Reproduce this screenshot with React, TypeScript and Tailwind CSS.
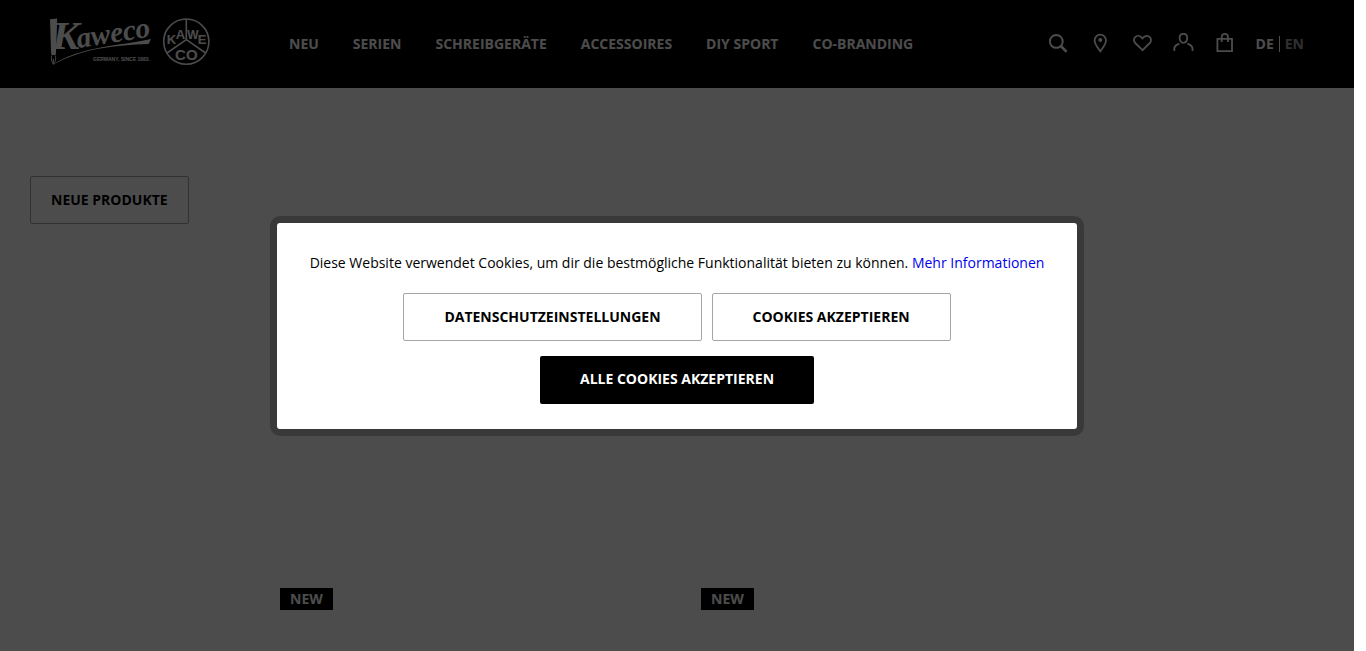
import type { ReactNode } from "react"
import clsx from "clsx"

const NAV_ITEMS = [
  "Neu",
  "Serien",
  "Schreibgeräte",
  "Accessoires",
  "DIY Sport",
  "Co-Branding",
]

function Logo() {
  return (
    <svg
      width="160"
      height="48"
      viewBox="0 0 160 48"
      fill="currentColor"
      className="overflow-visible"
    >
      {/* pen body and nib */}
      <path d="M0 1.2 L7.2 0.4 L6.8 13 L6 34 L5.6 37 L1.6 37 L1 34 L0.4 13 Z" />
      <path
        d="M1.8 37.5 C0.8 40.5 1.6 43.5 3.4 46.4 C5.4 43.5 6.4 40.5 5.2 37.5 M3.4 40.5 V46"
        fill="none"
        stroke="currentColor"
        strokeWidth="0.9"
      />
      {/* swoosh */}
      <path d="M3.8 46.2 C14 39 32 32.6 52 29.2 C70 26.2 86 24.3 101 21 L98.6 26 C82 26.6 66 27.8 50 30.6 C32 33.9 17 39 3.8 46.6 Z" />
      <g fontFamily="'Liberation Serif', serif" fontStyle="italic" fontWeight="700">
        <text x="2" y="31" fontSize="41">
          K
        </text>
        <text x="28" y="30" fontSize="29" transform="rotate(-9 28 30)">
          aweco
        </text>
      </g>
      <text
        x="43"
        y="43"
        fontSize="5"
        fontWeight="700"
        fontFamily="'Liberation Sans', sans-serif"
      >
        GERMANY, SINCE 1883.
      </text>

      {/* round emblem */}
      <g fill="none" stroke="currentColor" strokeWidth="1.6">
        <circle cx="136.3" cy="23.6" r="22.6" />
        <path d="M136.3 1 V21.6 L117 35 M136.3 21.6 L155.6 35" />
      </g>
      <g
        fontFamily="'Liberation Sans', sans-serif"
        fontWeight="700"
        textAnchor="middle"
      >
        <text x="121.5" y="26" fontSize="13">
          K
        </text>
        <text x="130.5" y="21" fontSize="13">
          A
        </text>
        <text x="143" y="21" fontSize="12">
          W
        </text>
        <text x="152" y="26" fontSize="13">
          E
        </text>
        <text x="136.3" y="42" fontSize="15">
          CO
        </text>
      </g>
    </svg>
  )
}

function IconLink({ label, children }: { label: string; children: ReactNode }) {
  return (
    <a href="#" aria-label={label} className="block">
      <svg
        width="22"
        height="22"
        viewBox="-1 0 22 22"
        fill="none"
        stroke="currentColor"
        strokeWidth="1.8"
      >
        {children}
      </svg>
    </a>
  )
}

function Header() {
  return (
    <header className="flex h-22 items-center bg-black px-[50px] text-sm font-bold text-white">
      <a href="#" aria-label="Kaweco" className="-mt-1 shrink-0">
        <Logo />
      </a>
      <nav className="ml-[79px] flex gap-[34px] uppercase">
        {NAV_ITEMS.map((item) => (
          <a key={item} href="#" className="whitespace-nowrap">
            {item}
          </a>
        ))}
      </nav>
      <div className="ml-auto flex items-center gap-5">
        <IconLink label="Suche">
          <circle cx="9.3" cy="8.4" r="6.4" strokeWidth="2" />
          <path d="M13.8 13 L19.6 18.8" strokeWidth="2.6" />
        </IconLink>
        <IconLink label="Händler">
          <path d="M11.3 18.4 C9.2 15 5.6 11.2 5.6 7.4 A5.7 5.7 0 0 1 17 7.4 C17 11.2 13.4 15 11.3 18.4 Z" />
          <circle cx="11.3" cy="7" r="2" fill="currentColor" stroke="none" />
        </IconLink>
        <IconLink label="Merkzettel">
          <path d="M11.5 17.2 L4.2 10 C2.6 8.4 2.6 5.6 4.2 4.1 C5.9 2.4 8.6 2.5 10.2 4.1 L11.5 5.5 L12.8 4.1 C14.4 2.5 17.1 2.4 18.8 4.1 C20.4 5.6 20.4 8.4 18.8 10 Z" />
        </IconLink>
        <IconLink label="Mein Konto">
          <path d="M10.4 0.8 C12.8 0.8 14.2 2.4 14.2 4.8 C14.2 7.8 12.6 9.8 10.4 9.8 C8.2 9.8 6.6 7.8 6.6 4.8 C6.6 2.4 8 0.8 10.4 0.8 Z" />
          <path d="M1.3 18 V15.4 C1.3 12.4 3.8 12 6.4 10.4 M19.5 18 V15.4 C19.5 12.4 17 12 14.4 10.4" />
        </IconLink>
        <IconLink label="Warenkorb">
          <path d="M2.4 5.8 H17 V18.2 H2.4 Z" />
          <path d="M6.7 9 V3.6 C6.7 0 12.9 0 12.9 3.6 V9" />
        </IconLink>
        <div className="flex items-center">
          <a href="#">DE</a>
          <span className="mx-[5px] h-4 w-px bg-white" />
          <a href="#" className="text-[#a0a0a0]">
            EN
          </a>
        </div>
      </div>
    </header>
  )
}

function CookieButton({
  primary,
  children,
}: {
  primary?: boolean
  children: ReactNode
}) {
  return (
    <button
      type="button"
      className={clsx(
        "h-12 rounded-xs px-10 text-sm font-bold uppercase",
        primary
          ? "bg-black pb-0.5 text-white"
          : "border border-[#a4a6ac] bg-white text-black"
      )}
    >
      {children}
    </button>
  )
}

function CookieDialog() {
  return (
    <div className="fixed inset-0 mr-3 flex items-center justify-center bg-black/70">
      <div
        role="dialog"
        aria-label="Cookies"
        className="max-w-[814px] grow rounded-[10px] bg-black/25 p-[7px]"
      >
        <div className="flex flex-col items-center gap-[15px] rounded-[3px] bg-white p-[25px]">
          <p className="text-sm leading-[30px] text-black">
            Diese Website verwendet Cookies, um dir die bestmögliche
            Funktionalität bieten zu können.{" "}
            <a href="#" className="text-[#0000ee]">
              Mehr Informationen
            </a>
          </p>
          <div className="flex gap-2.5">
            <CookieButton>Datenschutzeinstellungen</CookieButton>
            <CookieButton>Cookies akzeptieren</CookieButton>
          </div>
          <CookieButton primary>Alle Cookies akzeptieren</CookieButton>
        </div>
      </div>
    </div>
  )
}

function Product() {
  return (
    <article className="flex">
      <span className="bg-black px-2.5 text-sm leading-[22px] font-bold text-white">
        NEW
      </span>
    </article>
  )
}

export default function App() {
  return (
    <div className="h-screen overflow-hidden bg-white pr-3 font-['Open_Sans',sans-serif]">
      <Header />
      <main className="flex px-[30px] pt-22">
        <aside className="w-[250px] shrink-0">
          <a
            href="#"
            className="inline-flex h-12 items-center rounded-xs border border-[#a4a6ac] px-5 text-sm font-bold text-black"
          >
            NEUE PRODUKTE
          </a>
        </aside>
        <section className="grid max-w-[822px] grow grid-cols-2 gap-5 pt-[412px]">
          <Product />
          <Product />
        </section>
      </main>
      <CookieDialog />
    </div>
  )
}
